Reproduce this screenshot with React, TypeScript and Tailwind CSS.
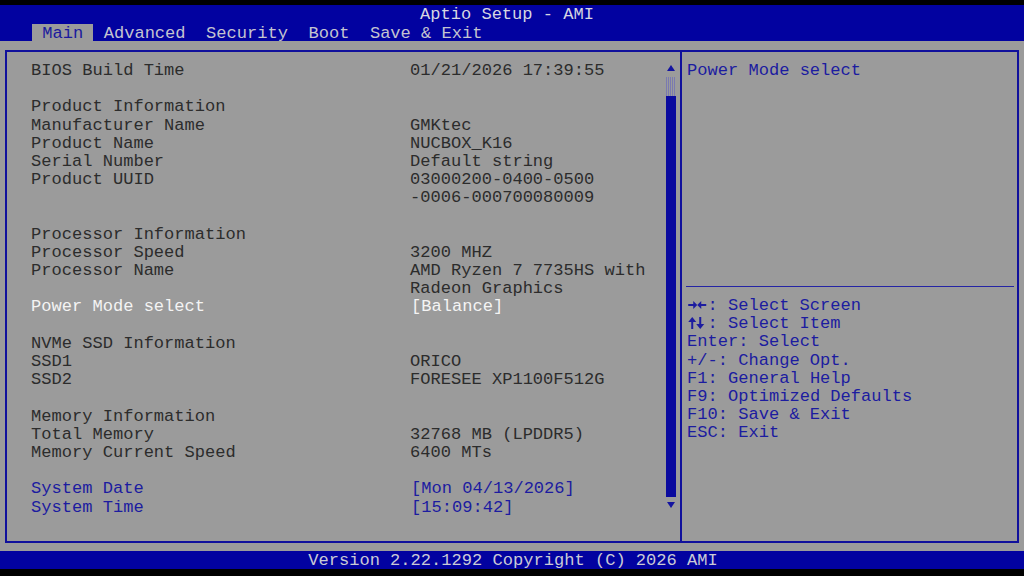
import React from "react";

type Row = { l?: string; v?: string; kind?: "sel" | "blue" };

const rows: Row[] = [
  { l: "BIOS Build Time", v: "01/21/2026 17:39:55" },
  {},
  { l: "Product Information" },
  { l: "Manufacturer Name", v: "GMKtec" },
  { l: "Product Name", v: "NUCBOX_K16" },
  { l: "Serial Number", v: "Default string" },
  { l: "Product UUID", v: "03000200-0400-0500" },
  { v: "-0006-000700080009" },
  {},
  { l: "Processor Information" },
  { l: "Processor Speed", v: "3200 MHZ" },
  { l: "Processor Name", v: "AMD Ryzen 7 7735HS with" },
  { v: "Radeon Graphics" },
  { l: "Power Mode select", v: "[Balance]", kind: "sel" },
  {},
  { l: "NVMe SSD Information" },
  { l: "SSD1", v: "ORICO" },
  { l: "SSD2", v: "FORESEE XP1100F512G" },
  {},
  { l: "Memory Information" },
  { l: "Total Memory", v: "32768 MB (LPDDR5)" },
  { l: "Memory Current Speed", v: "6400 MTs" },
  {},
  { l: "System Date", v: "[Mon 04/13/2026]", kind: "blue" },
  { l: "System Time", v: "[15:09:42]", kind: "blue" },
];

function LRArrows() {
  return (
    <svg width="20.48" height="12" viewBox="0 0 20 12" className="inline-block align-[-1px]">
      <g fill="#1c1ca0">
        <rect x="1" y="5" width="6" height="2" />
        <polygon points="6,2 10,6 6,10" />
        <rect x="13" y="5" width="6" height="2" />
        <polygon points="14,2 10,6 14,10" />
      </g>
    </svg>
  );
}

function UDArrows() {
  return (
    <svg width="20.48" height="12" viewBox="0 0 20 12" className="inline-block align-[-1px]">
      <g fill="#1c1ca0">
        <rect x="4" y="3" width="2" height="9" />
        <polygon points="1,5 5,0 9,5" />
        <rect x="12" y="0" width="2" height="9" />
        <polygon points="9,7 13,12 17,7" />
      </g>
    </svg>
  );
}

const keys: { k: React.ReactNode; t: string }[] = [
  { k: <LRArrows />, t: ": Select Screen" },
  { k: <UDArrows />, t: ": Select Item" },
  { k: "Enter", t: ": Select" },
  { k: "+/-", t: ": Change Opt." },
  { k: "F1", t: ": General Help" },
  { k: "F9", t: ": Optimized Defaults" },
  { k: "F10", t: ": Save & Exit" },
  { k: "ESC", t: ": Exit" },
];

function Scrollbar() {
  return (
    <div className="w-[10px] mr-[4px] mt-[12px] flex flex-col items-center">
      <svg width="10" height="8" viewBox="0 0 10 8">
        <polygon points="5,1 9,7 1,7" fill="#1414a0" />
      </svg>
      <div className="mt-[5px] w-[10px] h-[19px] bg-[repeating-linear-gradient(90deg,#7a7ab0_0px,#7a7ab0_1px,transparent_1px,transparent_2px)]" />
      <div className="w-[10px] h-[401px] bg-[#0a0a9e]" />
      <svg className="mt-[4px]" width="10" height="8" viewBox="0 0 10 8">
        <polygon points="1,1 9,1 5,7" fill="#1414a0" />
      </svg>
    </div>
  );
}

export default function App() {
  return (
    <div className="w-[1024px] h-[576px] bg-black flex flex-col overflow-hidden font-['Liberation_Mono',monospace] text-[17.07px] leading-[18.2px] whitespace-pre">
      <div className="h-[5px] bg-black" />
      <div className="h-[36px] bg-[#0202a0] flex flex-col">
        <div className="h-[19px] pt-[2px] flex items-center justify-center pr-[10px] text-[#d6d6e2]">
          Aptio Setup - AMI
        </div>
        <div className="h-[17px] flex items-end pl-[32px] text-[#c4c4d0]">
          <div className="h-[17px] pt-[3px] px-[10.24px] bg-[#9b9b9b] text-[#1a1a9e] flex items-center">Main</div>
          <div className="h-[17px] pt-[3px] px-[10.24px] flex items-center">Advanced</div>
          <div className="h-[17px] pt-[3px] px-[10.24px] flex items-center">Security</div>
          <div className="h-[17px] pt-[3px] px-[10.24px] flex items-center">Boot</div>
          <div className="h-[17px] pt-[3px] px-[10.24px] flex items-center">Save &amp; Exit</div>
        </div>
      </div>
      <div className="h-[510px] bg-[#9b9b9b] pt-[9px] pl-[5px] pr-[5px] pb-[8px]">
        <div className="h-[493px] border-2 border-[#10109c] flex">
          <div className="w-[673px] flex">
            <div className="flex-1 pl-[24px] pt-[10px] text-[#2c2c2c]">
              {rows.map((r, i) => {
                const color =
                  r.kind === "sel"
                    ? "text-[#f4f4f4]"
                    : r.kind === "blue"
                    ? "text-[#1c1ca0]"
                    : "text-[#2c2c2c]";
                return (
                  <div key={i} className={`h-[18.2px] flex ${color}`}>
                    <div className="w-[379px]">{r.l ?? ""}</div>
                    <div className={r.kind ? "ml-[1px]" : ""}>{r.v ?? ""}</div>
                  </div>
                );
              })}
            </div>
            <Scrollbar />
          </div>
          <div className="w-[2px] bg-[#10109c]" />
          <div className="flex-1 flex flex-col pl-[5px] pt-[10px] text-[#1c1ca0]">
            <div className="h-[224px]">Power Mode select</div>
            <div className="ml-[-1px] mr-[3px] h-[1px] bg-[#2424a4]" />
            <div className="pt-[10px]">
              {keys.map((k, i) => (
                <div key={i} className="h-[18.2px]">
                  {k.k}
                  {k.t}
                </div>
              ))}
            </div>
          </div>
        </div>
      </div>
      <div className="h-[18px] pt-[1px] bg-[#0202a0] text-center pl-[2px] text-[#cacad6]">
        Version 2.22.1292 Copyright (C) 2026 AMI
      </div>
      <div className="flex-1 bg-black" />
    </div>
  );
}
